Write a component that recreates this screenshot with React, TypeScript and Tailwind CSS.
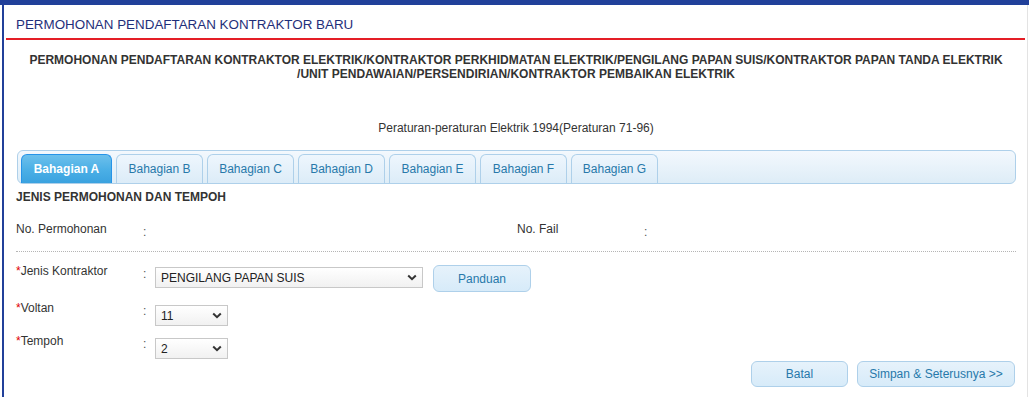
import React from 'react';

const tabs = ['Bahagian A', 'Bahagian B', 'Bahagian C', 'Bahagian D', 'Bahagian E', 'Bahagian F', 'Bahagian G'];

function Chevron() {
  return (
    <svg width="10" height="7" viewBox="0 0 10 7" className="shrink-0">
      <path d="M1.2 1.5 L5 5.2 L8.8 1.5" fill="none" stroke="#333" strokeWidth="2" />
    </svg>
  );
}

function FakeSelect({ value, width }: { value: string; width: string }) {
  return (
    <div
      className={`${width} h-[21px] flex items-center justify-between pl-[5px] pr-[5px] border border-[#c8c8c8] bg-linear-to-b from-white to-[#f1f1f1] text-[12px] text-[#222]`}
    >
      <span>{value}</span>
      <Chevron />
    </div>
  );
}

function UiButton({ label, width }: { label: string; width: string }) {
  return (
    <button
      className={`${width} h-[26px] rounded-[6px] border border-[#aed0ea] bg-linear-to-b from-[#e6f2fb] to-[#d7ebf9] text-[12px] text-[#2779aa]`}
    >
      {label}
    </button>
  );
}

function Field({ label, required, children }: { label: string; required?: boolean; children?: React.ReactNode }) {
  return (
    <div className="flex items-start">
      <div className="w-[127px] leading-[14px] text-[12px] text-[#333]">
        {required && <span className="text-[#e00000]">*</span>}
        {label}
      </div>
      <div className="w-[12px] leading-[14px] text-[12px] text-[#555] pt-[3px]">:</div>
      {children}
    </div>
  );
}

export default function App() {
  return (
    <div className="w-[1029px] h-[397px] bg-white overflow-hidden font-['Liberation_Sans',Arial,sans-serif]">
      <div className="h-[5px] bg-[#21409a]" />
      <div className="flex h-[392px]">
        <div className="w-[2px]" />
        <div className="flex-1 mr-[1px] border-l-2 border-[#21409a] border-r border-r-[#e3e3e3]">
          {/* header */}
          <div className="pl-[12px] pt-[13px] h-[33px] text-[13.4px] leading-[14px] text-[#1f2f7a]">
            PERMOHONAN PENDAFTARAN KONTRAKTOR BARU
          </div>
          <div className="mx-[2px] h-[2px] bg-[#e41e26]" />

          <div className="pl-[12px] pr-[11px]">
            <div className="mt-[13px] text-center font-bold text-[12px] leading-[14px] text-[#333]">
              <div>
                PERMOHONAN PENDAFTARAN KONTRAKTOR ELEKTRIK/KONTRAKTOR PERKHIDMATAN ELEKTRIK/PENGILANG PAPAN SUIS/KONTRAKTOR PAPAN TANDA ELEKTRIK
              </div>
              <div>/UNIT PENDAWAIAN/PERSENDIRIAN/KONTRAKTOR PEMBAIKAN ELEKTRIK</div>
            </div>

            <div className="mt-[40px] text-center text-[12px] leading-[14px] text-[#333]">
              Peraturan-peraturan Elektrik 1994(Peraturan 71-96)
            </div>

            {/* tabs */}
            <div className="mt-[15px] ml-[1px] h-[34px] rounded-[6px] border border-[#aed0ea] bg-linear-to-b from-[#f3f8fd] to-[#deedf7] flex items-end gap-[4px] pl-[3px]">
              {tabs.map((t, i) =>
                i === 0 ? (
                  <div
                    key={t}
                    className="w-[91px] h-[29px] rounded-t-[6px] border border-b-0 border-[#2694e8] bg-linear-to-b from-[#6cc0ec] via-[#4cb0e6] to-[#3aa2df] flex items-center justify-center text-[12px] font-bold text-white"
                  >
                    {t}
                  </div>
                ) : (
                  <div
                    key={t}
                    className="w-[87px] h-[29px] rounded-t-[6px] border border-b-0 border-[#aed0ea] bg-linear-to-b from-[#eef6fd] to-[#dcecf8] flex items-center justify-center text-[12px] text-[#2779aa]"
                  >
                    {t}
                  </div>
                )
              )}
            </div>

            <div className="mt-[6px] font-bold text-[12px] leading-[14px] text-[#333]">JENIS PERMOHONAN DAN TEMPOH</div>

            <div className="mt-[18px] flex">
              <div className="w-[501px]">
                <Field label="No. Permohonan" />
              </div>
              <div className="flex-1">
                <Field label="No. Fail" />
              </div>
            </div>

            <div className="mt-[12px] border-t border-dotted border-[#b5b5b5]" />

            <div className="mt-[12px]">
              <Field label="Jenis Kontraktor" required>
                <div className="mt-[3px]">
                  <FakeSelect value="PENGILANG PAPAN SUIS" width="w-[268px]" />
                </div>
                <div className="ml-[10px] mt-[1px]">
                  <UiButton label="Panduan" width="w-[98px] h-[27px]" />
                </div>
              </Field>
            </div>

            <div className="mt-[9px]">
              <Field label="Voltan" required>
                <div className="mt-[4px]">
                  <FakeSelect value="11" width="w-[73px]" />
                </div>
              </Field>
            </div>

            <div className="mt-[8px]">
              <Field label="Tempoh" required>
                <div className="mt-[4px]">
                  <FakeSelect value="2" width="w-[73px]" />
                </div>
              </Field>
            </div>

            <div className="mt-[2px] flex justify-end gap-[9px] pr-[1px]">
              <UiButton label="Batal" width="w-[97px]" />
              <UiButton label="Simpan & Seterusnya >>" width="w-[158px]" />
            </div>
          </div>
        </div>
      </div>
    </div>
  );
}
